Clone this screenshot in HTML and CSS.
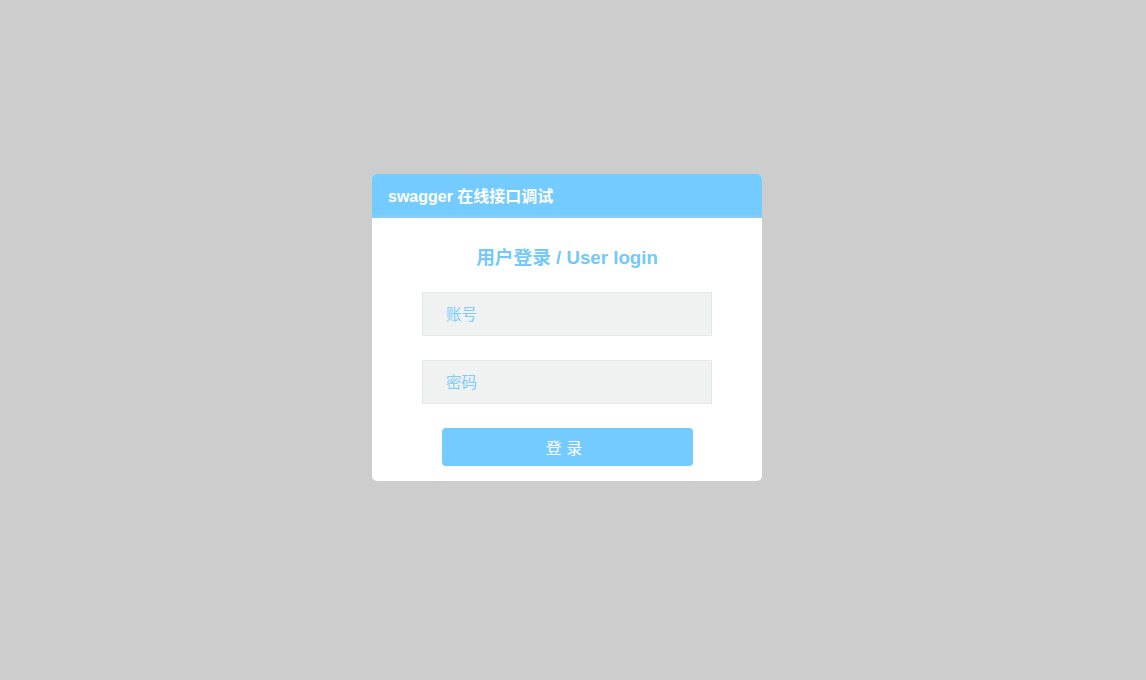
FILE: index.html
```html
<!DOCTYPE html>
<html>
<head>
<meta charset="utf-8">
<link rel="stylesheet" href="styles.css">
</head>
<body>
<div class="card">
  <div class="card-header">swagger 在线接口调试</div>
  <div class="card-body">
    <h2 class="title">用户登录 / User login</h2>
    <input class="field" type="text" placeholder="账号">
    <input class="field" type="password" placeholder="密码">
    <button class="btn">登 录</button>
  </div>
</div>
</body>
</html>
```
FILE: styles.css
```css
html, body {
  margin: 0;
  padding: 0;
  background: #cdcdcd;
  height: 100%;
}
body {
  font-family: "Liberation Sans", Arial, "Noto Sans CJK SC", sans-serif;
  padding-top: 174px;
  box-sizing: border-box;
}
.card {
  margin-left: 372px;
  width: 390px;
  background: #fff;
  border-radius: 5px;
  overflow: hidden;
}
.card-header {
  height: 44px;
  box-sizing: border-box;
  background: linear-gradient(to bottom, #74cbff 0, #74cbff 40px, #8fcdee 44px);
  color: #fff;
  font-weight: bold;
  font-size: 16px;
  line-height: 46px;
  padding-left: 16px;
}
.card-body {
  display: flex;
  flex-direction: column;
  align-items: center;
  padding: 27px 0 15px;
}
.title {
  margin: 0 0 23px;
  font-size: 18.7px;
  line-height: 24px;
  font-weight: bold;
  color: #74c9fc;
  transform: translateY(1px);
}
.field {
  width: 290px;
  height: 44px;
  box-sizing: border-box;
  background: #f0f2f2;
  border: 1px solid #e5e6e6;
  padding: 2px 0 0 23px;
  margin: 0 0 24px;
  font-family: "Liberation Sans", Arial, "Noto Sans CJK SC", sans-serif;
  font-size: 15.5px;
  color: #333;
  outline: none;
}
.field::placeholder {
  color: #7ccdfd;
}
.btn {
  width: 251px;
  height: 38px;
  border: none;
  border-radius: 4px;
  background: #74cbff;
  color: #fff;
  font-family: "Liberation Sans", Arial, "Noto Sans CJK SC", sans-serif;
  font-size: 16px;
  padding: 0 6px 0 0;
  cursor: pointer;
}
```
